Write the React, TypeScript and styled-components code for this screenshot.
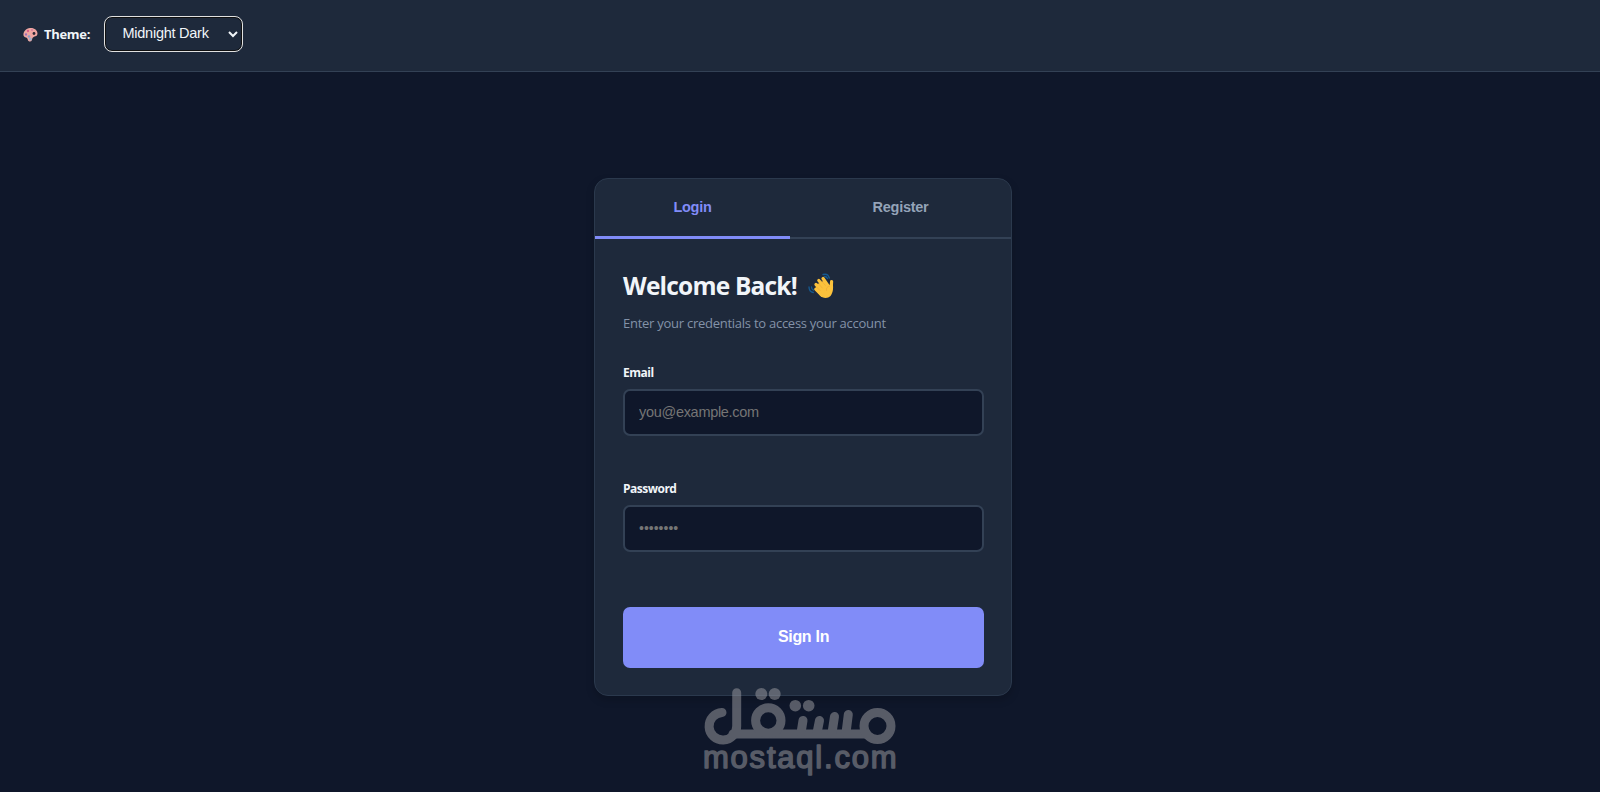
import React, { useState } from "react"
import styled, { createGlobalStyle } from "styled-components"

const uiFont = `"Open Sans", "Noto Sans", sans-serif`;
const controlFont = `"Liberation Sans", Arial, sans-serif`;

const GlobalStyle = createGlobalStyle`
    * {
        box-sizing: border-box;
    }
    body {
        margin: 0;
        background: #0f172a;
        color: #f1f5f9;
        font-family: ${uiFont};
        overflow: hidden;
    }
`;

const Page = styled.div`
    display: flex;
    flex-direction: column;
    height: 100vh;
`;
const Header = styled.header`
    display: flex;
    align-items: flex-start;
    height: 72px;
    padding: 16px 23px;
    background: #1e293b;
    border-bottom: 1px solid #334155;
`;
const ThemeLabel = styled.label`
    display: flex;
    align-items: center;
    gap: 6px;
    height: 36px;
    width: 81px;
    font-size: 13px;
    font-weight: 700;
    letter-spacing: -0.3px;
    white-space: nowrap;
`;
const ThemeSelect = styled.select`
    width: 137px;
    height: 34px;
    margin: 1px 0 0 0.5px;
    padding: 0 2px 2px 13px;
    background: #1e293b;
    color: #f1f5f9;
    border: 1px solid #101010;
    border-radius: 7px;
    outline: 1px solid #e0e0e0;
    font-family: ${controlFont};
    font-size: 14.5px;
    letter-spacing: -0.25px;
`;
const Main = styled.main`
    display: flex;
    flex: 1;
    justify-content: center;
    align-items: flex-start;
    padding: 106px 0 0 6px;
`;
const Card = styled.section`
    width: 418px;
    height: 518px;
    background: #1e293b;
    border: 1px solid #2b394d;
    border-radius: 14px;
    box-shadow: 0 4px 8px rgba(0, 0, 0, 0.18);
`;
const Tabs = styled.div`
    display: flex;
    height: 60px;
    border-bottom: 2px solid #334155;
`;
const Tab = styled.button<{ $active: boolean; $width: number }>`
    flex: 0 0 ${({ $width }) => $width}px;
    height: 60px;
    padding: 0 0 1px;
    background: none;
    border: 0;
    border-bottom: 3px solid ${({ $active }) => ($active ? "#818cf8" : "transparent")};
    color: ${({ $active }) => ($active ? "#818cf8" : "#94a3b8")};
    font-family: ${controlFont};
    font-size: 14.5px;
    font-weight: 700;
    letter-spacing: -0.25px;
`;
const Form = styled.form`
    display: flex;
    flex-direction: column;
    padding: 30px 27px 0 28px;
`;
const Title = styled.h1`
    display: flex;
    align-items: center;
    gap: 11px;
    margin: 0;
    font-size: 24.5px;
    line-height: 34px;
    font-weight: 700;
    letter-spacing: -0.8px;
`;
const Subtitle = styled.p`
    margin: 10px 0 0;
    color: #8392a8;
    font-size: 13px;
    line-height: 20px;
    letter-spacing: -0.26px;
`;
const Field = styled.div`
    display: flex;
    flex-direction: column;
    gap: 7px;
    height: 116px;
`;
const Fields = styled.div`
    margin-top: 31px;
`;
const Label = styled.label`
    font-size: 12px;
    line-height: 18px;
    font-weight: 700;
    letter-spacing: -0.5px;
`;
const Input = styled.input`
    height: 47px;
    padding: 0 14px 2px;
    background: #0f172a;
    color: #f1f5f9;
    border: 2px solid #334155;
    border-radius: 7px;
    outline: none;
    font-family: ${controlFont};
    font-size: 14.5px;
    letter-spacing: -0.3px;

    &::placeholder {
        color: #757575;
    }
    &[type="password"] {
        font-size: 14px;
        letter-spacing: 0;
    }
`;
const SubmitButton = styled.button`
    height: 61px;
    margin-top: 11px;
    padding: 0 0 2px;
    background: #818cf8;
    color: #fff;
    border: 0;
    border-radius: 7px;
    font-family: ${controlFont};
    font-size: 16px;
    font-weight: 700;
    letter-spacing: -0.3px;
`;
const Watermark = styled.svg`
    position: absolute;
    left: 700px;
    top: 684px;
    opacity: 0.5;
    pointer-events: none;
`;

const PaletteIcon = () => (
    <svg width="15" height="15" viewBox="0 0 30 30">
        <path d="M14 2C6 3 0 9 1 17c1 4 5 3 7 5s1 7 6 7c4 0 4-4 5-7 2-4 10-2 10-9C29 6 22 1 14 2z" fill="#efa7a2" />
        <circle cx="22" cy="13" r="2.8" fill="#2b2735" />
        <circle cx="10" cy="8" r="2.3" fill="#d95c88" />
        <circle cx="18" cy="6" r="2" fill="#d77b9c" />
        <circle cx="6" cy="15" r="2.3" fill="#9a70b8" />
        <circle cx="12" cy="19" r="2.6" fill="#8d9cc6" />
        <circle cx="15" cy="24" r="3" fill="#a3b0cb" />
    </svg>
)

const WaveIcon = () => (
    <svg width="26" height="26" viewBox="0 0 26 26">
        <g fill="none" stroke="#155a91" strokeWidth="1.3" strokeLinecap="round">
            <path d="M15 1.500c3-.8 5.500.6 6.300 3.500M16.500 3.500c1.600 0 2.500.8 3 2" />
            <path d="M1 14c0 3 1.500 5 4.300 5.500M3.500 14c0 1.600.6 2.600 2 3.200" />
        </g>
        <path d="M10 11L17 7L20.500 13L24.500 9C25.500 14 25.500 19 22.500 23C19.500 26 14.500 25.500 11.500 22L7 16z" fill="#fcc23c" />
        <g fill="none" stroke="#fcc23c" strokeWidth="3.200" strokeLinecap="round">
            <path d="M7.800 16.200l6 6M8 11.500l7 7M10.800 7.500l7 8M15 5.500l5.500 8M23.600 8.500l-.5 7" />
        </g>
        <g fill="none" stroke="#e9a13a" strokeWidth=".5" strokeLinecap="round">
            <path d="M8.500 14l3.500 3.500M10.300 10.500l4 4.500M13.500 7.800l3.800 4.600M21.500 13c-2.500.5-3.500 2.500-3 4.500" />
        </g>
    </svg>
)

const MostaqlMark = () => (
    <Watermark width="200" height="100" viewBox="700 684 200 100">
        <g fill="none" stroke="#a0a0a5" strokeWidth="9" strokeLinecap="round" strokeLinejoin="round">
            <path d="M722 712.500A13.800 13.800 0 1 0 736.700 726V692.800" />
            <path d="M733 734H866" />
            <circle cx="877.5" cy="726" r="13.500" />
            <circle cx="768.300" cy="720.500" r="12.700" />
            <path d="M803 720.500L801 733M819.500 720.500L817 733M834.500 716.500L832 733M848.300 714.500L846 733" />
        </g>
        <g fill="#a0a0a5">
            <circle cx="761.300" cy="694" r="6" />
            <circle cx="774.700" cy="694" r="6" />
            <circle cx="795.300" cy="705.700" r="5.800" />
            <circle cx="808.700" cy="705.700" r="5.800" />
            <text
                x="703"
                y="768.300"
                fontFamily="Liberation Sans, Arial, sans-serif"
                fontSize="31"
                textLength="193.500"
                stroke="#a0a0a5"
                strokeWidth="1.500"
                strokeLinejoin="round"
            >
                mostaql.com
            </text>
        </g>
    </Watermark>
)

const App = () => {
    const [tab, setTab] = useState("login");

    return (
        <Page>
            <GlobalStyle />
            <Header>
                <ThemeLabel htmlFor="theme"><PaletteIcon />Theme:</ThemeLabel>
                <ThemeSelect id="theme" defaultValue="midnight">
                    <option value="midnight">Midnight Dark</option>
                </ThemeSelect>
            </Header>
            <Main>
                <Card>
                    <Tabs>
                        <Tab type="button" $width={195} $active={tab === "login"} onClick={() => setTab("login")}>Login</Tab>
                        <Tab type="button" $width={221} $active={tab === "register"} onClick={() => setTab("register")}>Register</Tab>
                    </Tabs>
                    <Form onSubmit={(e) => e.preventDefault()}>
                        <Title>Welcome Back! <WaveIcon /></Title>
                        <Subtitle>Enter your credentials to access your account</Subtitle>
                        <Fields>
                            <Field>
                                <Label htmlFor="email">Email</Label>
                                <Input id="email" type="email" placeholder="you@example.com" />
                            </Field>
                            <Field>
                                <Label htmlFor="password">Password</Label>
                                <Input id="password" type="password" placeholder="••••••••" />
                            </Field>
                        </Fields>
                        <SubmitButton type="submit">Sign In</SubmitButton>
                    </Form>
                </Card>
            </Main>
            <MostaqlMark />
        </Page>
    )
}

export default App
